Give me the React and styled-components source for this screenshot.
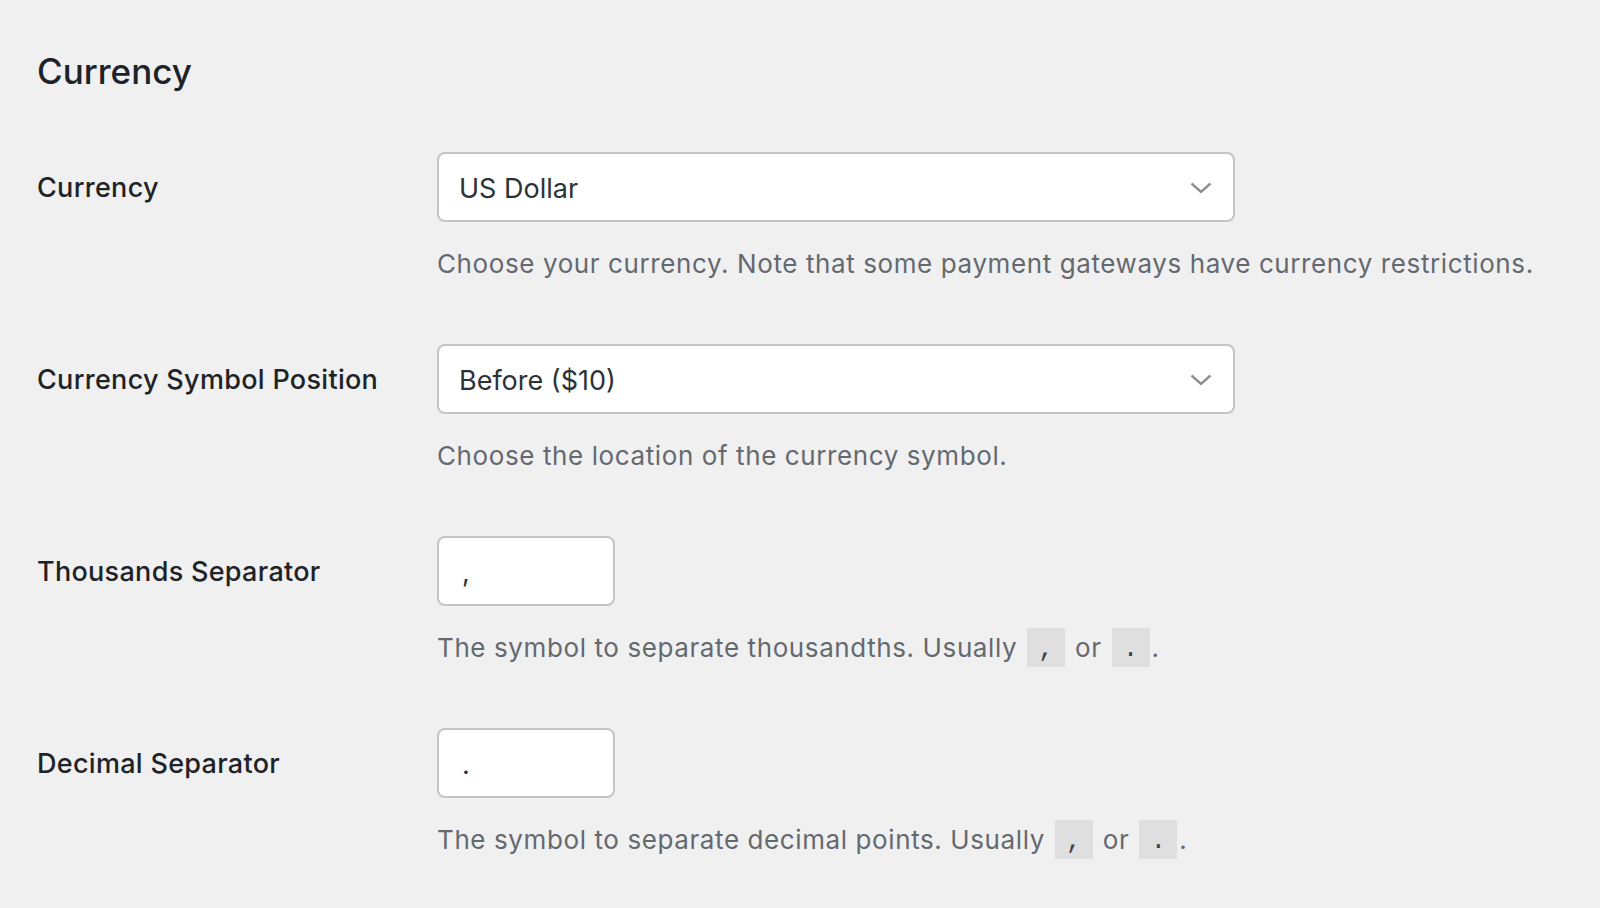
import React from 'react';
import styled, { createGlobalStyle } from 'styled-components';

const GlobalStyle = createGlobalStyle`
  html, body {
    margin: 0;
    padding: 0;
    background: #f0f0f1;
  }
  body {
    font-family: Inter, "Noto Sans", "Liberation Sans", sans-serif;
    color: #1d2327;
  }
`;

const Page = styled.div`
  min-height: 908px;
  padding: 48px 0 0 37px;
  box-sizing: border-box;
`;

const Heading = styled.h2`
  margin: 0 0 57px 0;
  font-size: 35px;
  line-height: 47px;
  font-weight: 500;
  color: #1d2327;
`;

const Row = styled.div`
  display: grid;
  grid-template-columns: 400px 1fr;
  padding-bottom: 61px;
`;

const Label = styled.label`
  height: 70px;
  line-height: 72px;
  font-size: 27px;
  font-weight: 500;
  letter-spacing: 0.3px;
  color: #1d2327;
`;

const Field = styled.div`
  display: flex;
  flex-direction: column;
  align-items: flex-start;
`;

const SelectBox = styled.div`
  position: relative;
  width: 798px;
  height: 70px;
  box-sizing: border-box;
  border: 2px solid #c3c4c7;
  border-radius: 8px;
  background: #fff;
  display: flex;
  align-items: center;
  padding: 2px 20px 0;
  font-size: 27px;
  color: #2c3338;
`;

const Chevron = styled.svg`
  position: absolute;
  right: 21px;
  top: 50%;
  margin-top: -5px;
`;

const TextInput = styled.div`
  width: 178px;
  height: 70px;
  box-sizing: border-box;
  border: 2px solid #c3c4c7;
  border-radius: 8px;
  background: #fff;
  display: flex;
  align-items: center;
  padding: 2px 23px 0;
  font-size: 27px;
  color: #2c3338;
`;

const Description = styled.p`
  margin: 22px 0 0 0;
  font-size: 26px;
  line-height: 39px;
  letter-spacing: 0.6px;
  color: #646970;
  white-space: nowrap;
`;

const Code = styled.code`
  display: inline-block;
  width: 38px;
  height: 39px;
  margin: 0 2px;
  vertical-align: top;
  background: rgba(0, 0, 0, 0.07);
  font-family: "Liberation Mono", "DejaVu Sans Mono", monospace;
  font-size: 26px;
  line-height: 42px;
  letter-spacing: 0;
  text-align: center;
  color: #3c434a;
`;

const Select = ({ value }) => (
  <SelectBox>
    {value}
    <Chevron width="22" height="12" viewBox="0 0 22 12">
      <path d="M1.5 1.5 L11 10 L20.5 1.5" fill="none" stroke="#8c8f94" strokeWidth="2.4" />
    </Chevron>
  </SelectBox>
);

const Usually = ({ text }) => (
  <Description>
    {text} Usually <Code>,</Code> or <Code>.</Code>.
  </Description>
);

export default function App() {
  return (
    <>
      <GlobalStyle />
      <Page>
        <Heading>Currency</Heading>

        <Row>
          <Label>Currency</Label>
          <Field>
            <Select value="US Dollar" />
            <Description>
              Choose your currency. Note that some payment gateways have currency restrictions.
            </Description>
          </Field>
        </Row>

        <Row>
          <Label>Currency Symbol Position</Label>
          <Field>
            <Select value="Before ($10)" />
            <Description>Choose the location of the currency symbol.</Description>
          </Field>
        </Row>

        <Row>
          <Label>Thousands Separator</Label>
          <Field>
            <TextInput>,</TextInput>
            <Usually text="The symbol to separate thousandths." />
          </Field>
        </Row>

        <Row>
          <Label>Decimal Separator</Label>
          <Field>
            <TextInput>.</TextInput>
            <Usually text="The symbol to separate decimal points." />
          </Field>
        </Row>
      </Page>
    </>
  );
}
